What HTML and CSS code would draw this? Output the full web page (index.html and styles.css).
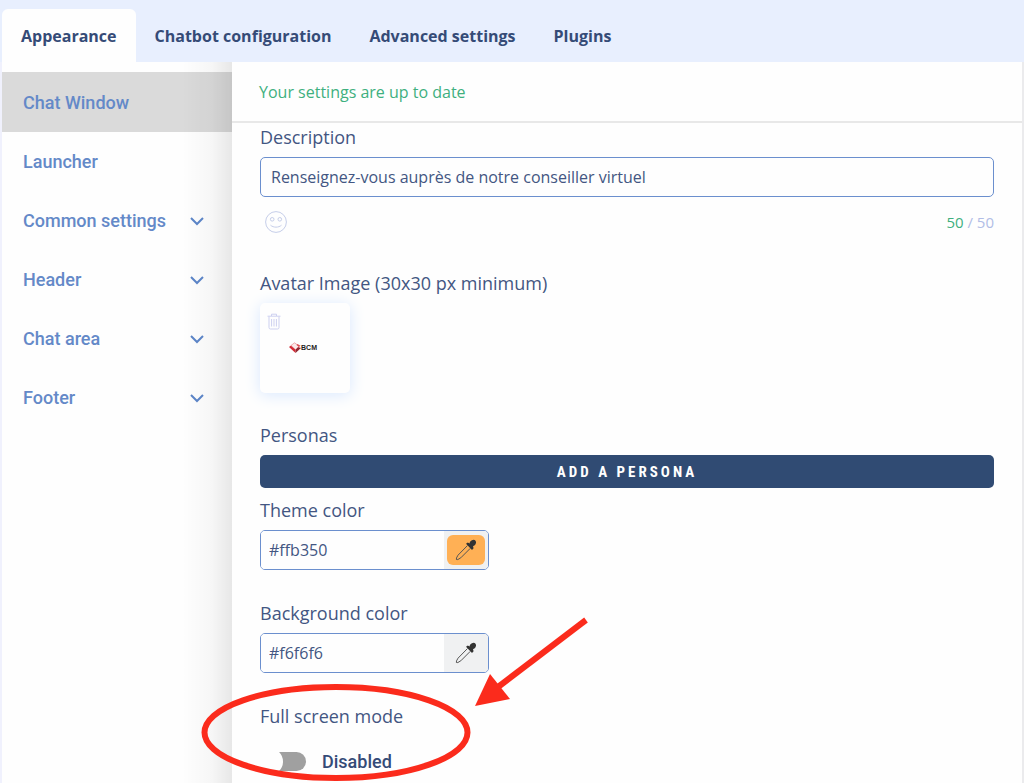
FILE: index.html
```html
<!DOCTYPE html>
<html lang="en">
<head>
    <meta charset="UTF-8">
    <title>Chatbot settings</title>
    <link rel="stylesheet" href="styles.css">
</head>
<body>
    <nav class="tabs">
        <a class="tab active" href="#">Appearance</a>
        <a class="tab" href="#">Chatbot configuration</a>
        <a class="tab" href="#">Advanced settings</a>
        <a class="tab" href="#">Plugins</a>
    </nav>

    <div class="page">
        <nav class="sidebar">
            <a class="item selected" href="#">Chat Window</a>
            <a class="item" href="#">Launcher</a>
            <a class="item" href="#">Common settings <svg class="chevron" viewBox="0 0 14 10"><path d="M1 2l6 6 6-6"/></svg></a>
            <a class="item" href="#">Header <svg class="chevron" viewBox="0 0 14 10"><path d="M1 2l6 6 6-6"/></svg></a>
            <a class="item" href="#">Chat area <svg class="chevron" viewBox="0 0 14 10"><path d="M1 2l6 6 6-6"/></svg></a>
            <a class="item" href="#">Footer <svg class="chevron" viewBox="0 0 14 10"><path d="M1 2l6 6 6-6"/></svg></a>
        </nav>

        <main class="content">
            <div class="status">Your settings are up to date</div>

            <form class="settings">
                <div class="field">
                    <label class="label" for="description">Description</label>
                    <input class="text-input" id="description" type="text" maxlength="50" value="Renseignez-vous auprès de notre conseiller virtuel">
                    <div class="input-footer">
                        <button class="icon-button" type="button" aria-label="Insert emoji">
                            <svg class="smiley" viewBox="0 0 22 22">
                                <circle cx="11" cy="11" r="10.4"/>
                                <circle cx="7.2" cy="8.3" r="1.8"/>
                                <circle cx="14.8" cy="8.3" r="1.8"/>
                                <path d="M5.5 14.2c3 2.6 8 2.6 11 0"/>
                            </svg>
                        </button>
                        <span class="counter"><span class="count">50</span> / 50</span>
                    </div>
                </div>

                <div class="field">
                    <div class="label">Avatar Image (30x30 px minimum)</div>
                    <div class="avatar">
                        <button class="icon-button delete" type="button" aria-label="Delete avatar">
                            <svg class="trash" viewBox="0 0 14 16">
                                <path d="M.5 2.7h13M4.5 2.5V.7h5v1.8M2 3v11q0 1.5 1.5 1.5h7q1.5 0 1.5-1.5V3M4.6 5.5v7.5M7 5.5v7.5M9.4 5.5v7.5"/>
                            </svg>
                        </button>
                        <div class="logo">
                            <svg class="logo-mark" viewBox="0 0 12 11">
                                <path d="M0 5l2-1.5 4.5 4V11z" fill="#d32a35"/>
                                <path d="M6.5 11V7.5L9 5l3 1z" fill="#8f2630"/>
                                <path d="M2 3.5L5.5 .8 10 4 6.5 7.5z" fill="#fbeaea" stroke="#e0666c" stroke-width=".5"/>
                                <path d="M8.5 2l3 1.800L10 5 7.500 3z" fill="#dd4b52"/>
                            </svg>
                            <span>BCM</span>
                        </div>
                    </div>
                </div>

                <div class="field personas">
                    <div class="label">Personas</div>
                    <button class="add-button" type="button">ADD A PERSONA</button>
                </div>

                <div class="field color-field">
                    <label class="label" for="theme">Theme color</label>
                    <div class="color-input">
                        <input class="color-value" id="theme" type="text" value="#ffb350">
                        <button class="picker theme" type="button" aria-label="Pick theme color">
                            <svg class="dropper" viewBox="0 0 22 22">
                                <path class="glass" d="M12.5 6.5L3 16.2q-2.2 3.3-1.6 4.3t4.4-1.7L15.3 9.3"/>
                                <path class="bulb" d="M11 4.8l1.8-1.3 1.7 1Q15 1.2 18.5 .8 21.3 1 21 4q-.4 2.5-3 3.3l.6 2-1.6 1.8z"/>
                            </svg>
                        </button>
                    </div>
                </div>

                <div class="field color-field">
                    <label class="label" for="background">Background color</label>
                    <div class="color-input">
                        <input class="color-value" id="background" type="text" value="#f6f6f6">
                        <button class="picker" type="button" aria-label="Pick background color">
                            <svg class="dropper" viewBox="0 0 22 22">
                                <path class="glass" d="M12.5 6.5L3 16.2q-2.2 3.3-1.6 4.3t4.4-1.7L15.3 9.3"/>
                                <path class="bulb" d="M11 4.8l1.8-1.3 1.7 1Q15 1.2 18.5 .8 21.3 1 21 4q-.4 2.5-3 3.3l.6 2-1.6 1.8z"/>
                            </svg>
                        </button>
                    </div>
                </div>

                <div class="field fullscreen">
                    <div class="label">Full screen mode</div>
                    <label class="switch">
                        <input class="toggle" type="checkbox">
                        Disabled
                    </label>
                    <svg class="highlight" viewBox="0 0 390 168">
                        <ellipse cx="136" cy="117.5" rx="131.5" ry="45.5"/>
                        <path class="shaft" d="M386 5L298 72"/>
                        <path class="head" d="M275 91l15-32 20 25z"/>
                    </svg>
                </div>
            </form>
        </main>
    </div>
</body>
</html>
```

FILE: styles.css
```css
* {
    box-sizing: border-box;
}

body {
    margin: 0;
    height: 100vh;
    display: flex;
    flex-direction: column;
    background: #fefefe;
    color: #354b77;
    font-family: "Open Sans", sans-serif;
    overflow: hidden;
}

a {
    text-decoration: none;
}

button {
    padding: 0;
    border: none;
    cursor: pointer;
}

svg {
    display: block;
    fill: none;
}

.tabs {
    display: flex;
    flex-shrink: 0;
    height: 62px;
    padding: 9px 0 0 2px;
    background: #e8effe;
}

.tab {
    padding: 0 19px;
    border-radius: 6px 6px 0 0;
    color: #354b77;
    font-size: 16px;
    font-weight: 700;
    line-height: 54px;
}

.tab.active {
    background: #fefefe;
}

.page {
    flex: 1;
    display: flex;
}

.sidebar {
    width: 232px;
    flex-shrink: 0;
    padding-top: 10px;
    border-left: 2px solid #f0f1fd;
    background: linear-gradient(to left, rgba(0, 0, 0, 0.09), rgba(0, 0, 0, 0.03) 20px, transparent 50px);
}

.item {
    display: flex;
    align-items: center;
    justify-content: space-between;
    height: 59px;
    padding: 0 28px 0 21px;
    color: #6489c8;
    font-family: Roboto, sans-serif;
    font-size: 18px;
    font-weight: 500;
}

.item.selected {
    height: 60px;
    background: rgba(0, 0, 0, 0.14);
}

.chevron {
    width: 14px;
    height: 10px;
    stroke: #5b84c6;
    stroke-width: 2;
}

.content {
    flex: 1;
    border-right: 2px solid #ebebed;
}

.status {
    height: 61px;
    padding-left: 27px;
    border-bottom: 2px solid #e8e8e8;
    color: #3fb07f;
    font-size: 16px;
    line-height: 60px;
}

.settings {
    padding: 0 28px;
}

.field {
    display: flex;
    flex-direction: column;
    align-items: flex-start;
    margin-bottom: 28px;
}

.color-field {
    margin-bottom: 29px;
}

.label {
    color: #435682;
    font-size: 18px;
    line-height: 28px;
    margin-bottom: 6px;
}

.text-input {
    width: 100%;
    height: 40px;
    padding: 0 10px;
    border: 1px solid #6b8fce;
    border-radius: 5px;
    background: #fefefe;
    color: #435682;
    font-family: inherit;
    font-size: 16px;
}

.input-footer {
    width: 100%;
    height: 44px;
    display: flex;
    align-items: center;
    justify-content: space-between;
    padding: 6px 0 0 5px;
}

.icon-button {
    background: none;
}

.smiley {
    width: 22px;
    height: 22px;
    stroke: #c6cee9;
}

.counter {
    color: #b1bde6;
    font-size: 15px;
}

.count {
    color: #3fb07f;
}

.avatar {
    position: relative;
    width: 90px;
    height: 90px;
    display: flex;
    align-items: center;
    justify-content: center;
    border-radius: 5px;
    background: #fefefe;
    box-shadow: 0 2px 16px #d9e8fe;
}

.delete {
    position: absolute;
    top: 10px;
    left: 7px;
}

.trash {
    width: 14px;
    height: 17px;
    stroke: #cdd0f0;
}

.logo {
    display: flex;
    align-items: center;
    padding: 0 4px 2px 0;
    color: #222;
    font: bold 7px "Liberation Sans", sans-serif;
}

.logo-mark {
    width: 12px;
    height: 11px;
}

.personas {
    margin-bottom: 8px;
}

.add-button {
    width: 100%;
    height: 33px;
    border-radius: 5px;
    background: #304b73;
    color: #fff;
    font-family: "Roboto Condensed", Roboto, sans-serif;
    font-size: 15px;
    font-weight: 700;
    letter-spacing: 3px;
}

.color-input {
    display: flex;
    width: 229px;
    height: 40px;
    border: 1px solid #6b8fce;
    border-radius: 5px;
    overflow: hidden;
}

.color-value {
    flex: 1;
    min-width: 0;
    padding: 0 8px;
    border: none;
    background: #fefefe;
    color: #435682;
    font-family: inherit;
    font-size: 16px;
}

.picker {
    width: 44px;
    display: flex;
    align-items: center;
    justify-content: center;
    padding: 4px 3px;
    background: #f0f1f2;
}

.dropper {
    width: 38px;
    height: 30px;
    padding: 4px 8px;
    border-radius: 6px;
}

.theme .dropper {
    background: #ffb055;
}

.glass {
    stroke: #555;
}

.bulb {
    fill: #333;
}

.fullscreen {
    position: relative;
    margin-bottom: 0;
}

.switch {
    display: flex;
    align-items: center;
    gap: 16px;
    height: 50px;
    font-family: Roboto, sans-serif;
    font-size: 18px;
    font-weight: 500;
}

.toggle {
    appearance: none;
    position: relative;
    width: 46px;
    height: 19px;
    margin: 0;
    border-radius: 10px;
    background: #a0a0a0;
}

.toggle::before {
    content: "";
    position: absolute;
    top: -4px;
    left: -4px;
    width: 27px;
    height: 27px;
    border-radius: 50%;
    background: #fefefe;
}

/* marker drawn over the full screen option */
.highlight {
    position: absolute;
    top: -87px;
    left: -60px;
    width: 390px;
    height: 168px;
    stroke: #fb2b1c;
    stroke-width: 6;
    pointer-events: none;
}

.highlight .head {
    fill: #fb2b1c;
    stroke: none;
}
```
